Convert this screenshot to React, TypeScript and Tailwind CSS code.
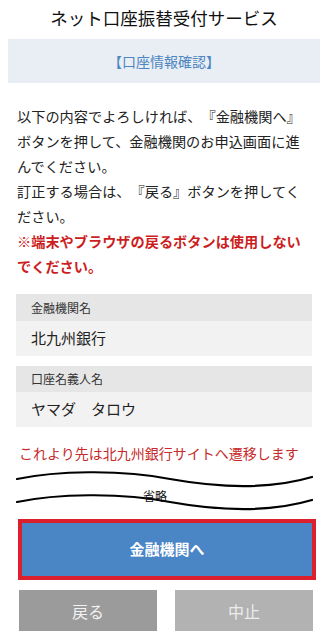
import React from 'react';

const font = { fontFamily: '"Noto Sans CJK JP", "Noto Sans", sans-serif' };

const Field = ({ label, value, labelH }: { label: string; value: string; labelH: string }) => (
  <div className="mx-4 w-[296px]">
    <div className={`${labelH} flex items-center pl-[15px] bg-[#e6e6e6] text-[12px] text-[#333]`}>{label}</div>
    <div className="h-[35px] flex items-center pl-[15px] bg-[#f2f2f2] text-[15px] text-[#222]">{value}</div>
  </div>
);

const Omitted = () => (
  <div className="relative h-[52px]">
    <svg className="absolute inset-0" width="328" height="52" viewBox="0 0 328 52" fill="none">
      <path d="M17 16 C55 8 120 6 170 16 C215 24 265 28 312 14" stroke="#000" strokeWidth="2.2" strokeLinecap="round" />
      <path d="M17 39 C55 31 120 29 170 39 C215 47 265 51 312 37" stroke="#000" strokeWidth="2.2" strokeLinecap="round" />
    </svg>
    <div className="relative pl-[143px] pt-[24px] text-[12px] leading-[18px] text-[#111]">省略</div>
  </div>
);

const App = () => {
  return (
    <div className="w-[328px] h-[634px] overflow-hidden bg-white [text-spacing-trim:space-all]" style={font}>
      <div className="h-[39px] flex items-center justify-center pb-[2px] text-[17.5px] text-[#111]">
        ネット口座振替受付サービス
      </div>

      <div className="mx-2 h-[44px] flex items-center justify-center bg-[#e9eef5] text-[14px] text-[#4d86c0]">
        【口座情報確認】
      </div>

      <div className="mt-[21px] px-[17px] text-[14.2px] leading-[25px] text-[#222]">
        <p>以下の内容でよろしければ、『金融機関へ』ボタンを押して、金融機関のお申込画面に進んでください。</p>
        <p>訂正する場合は、『戻る』ボタンを押してください。</p>
        <p className="font-bold text-[#cc1e1e]">※端末やブラウザの戻るボタンは使用しないでください。</p>
      </div>

      <div className="mt-[15px]">
        <Field label="金融機関名" value="北九州銀行" labelH="h-[27px]" />
      </div>
      <div className="mt-[10px]">
        <Field label="口座名義人名" value="ヤマダ　タロウ" labelH="h-[26px]" />
      </div>

      <p className="mt-[16px] pl-[19px] text-[14px] leading-[20px] text-[#c62a2a]">
        これより先は北九州銀行サイトへ遷移します
      </p>

      <Omitted />

      <button className="mt-[4px] ml-[18px] w-[298px] h-[61px] border-4 border-[#dc1f2d] bg-[#4a85c6] text-white font-bold text-[15px] flex items-center justify-center">
        金融機関へ
      </button>

      <div className="mt-[10px] ml-[19px] flex gap-[18px]">
        <button className="w-[138px] h-[41px] bg-[#9b9b9b] text-[#f2f2f2] text-[16px]">戻る</button>
        <button className="w-[138px] h-[41px] bg-[#b2b2b2] text-[#ececec] text-[16px]">中止</button>
      </div>
    </div>
  );
};

export default App;
